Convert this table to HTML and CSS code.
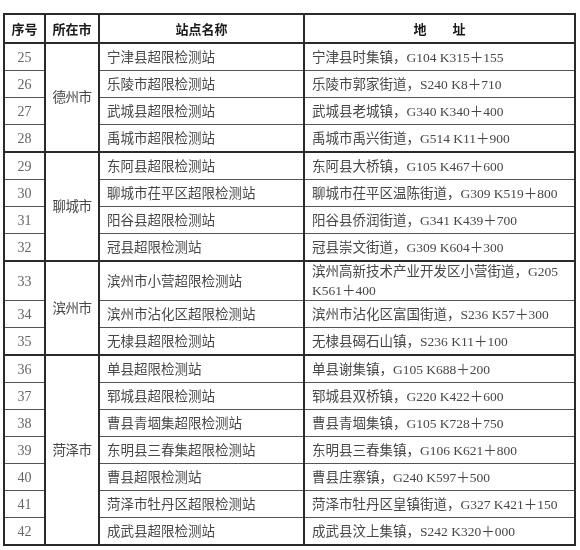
FILE: index.html
```html
<!DOCTYPE html>
<html lang="zh-CN">
<head>
<meta charset="utf-8">
<title>超限检测站</title>
<link rel="stylesheet" href="styles.css">
</head>
<body>
<table class="sites">
  <colgroup><col class="c1"><col class="c2"><col class="c3"><col class="c4"></colgroup>
  <thead>
    <tr><th>序号</th><th>所在市</th><th>站点名称</th><th>地　　址</th></tr>
  </thead>
  <tbody>
    <tr><td class="num">25</td><td class="city" rowspan="4">德州市</td><td>宁津县超限检测站</td><td>宁津县时集镇，G104 K315＋155</td></tr>
    <tr><td class="num">26</td><td>乐陵市超限检测站</td><td>乐陵市郭家街道，S240 K8＋710</td></tr>
    <tr><td class="num">27</td><td>武城县超限检测站</td><td>武城县老城镇，G340 K340＋400</td></tr>
    <tr><td class="num">28</td><td>禹城市超限检测站</td><td>禹城市禹兴街道，G514 K11＋900</td></tr>
  </tbody>
  <tbody>
    <tr><td class="num">29</td><td class="city" rowspan="4">聊城市</td><td>东阿县超限检测站</td><td>东阿县大桥镇，G105 K467＋600</td></tr>
    <tr><td class="num">30</td><td>聊城市茌平区超限检测站</td><td>聊城市茌平区温陈街道，G309 K519＋800</td></tr>
    <tr><td class="num">31</td><td>阳谷县超限检测站</td><td>阳谷县侨润街道，G341 K439＋700</td></tr>
    <tr><td class="num">32</td><td>冠县超限检测站</td><td>冠县崇文街道，G309 K604＋300</td></tr>
  </tbody>
  <tbody>
    <tr><td class="num">33</td><td class="city" rowspan="3">滨州市</td><td>滨州市小营超限检测站</td><td>滨州高新技术产业开发区小营街道，G205 K561＋400</td></tr>
    <tr><td class="num">34</td><td>滨州市沾化区超限检测站</td><td>滨州市沾化区富国街道，S236 K57＋300</td></tr>
    <tr><td class="num">35</td><td>无棣县超限检测站</td><td>无棣县碣石山镇，S236 K11＋100</td></tr>
  </tbody>
  <tbody>
    <tr><td class="num">36</td><td class="city" rowspan="7">菏泽市</td><td>单县超限检测站</td><td>单县谢集镇，G105 K688＋200</td></tr>
    <tr><td class="num">37</td><td>郓城县超限检测站</td><td>郓城县双桥镇，G220 K422＋600</td></tr>
    <tr><td class="num">38</td><td>曹县青堌集超限检测站</td><td>曹县青堌集镇，G105 K728＋750</td></tr>
    <tr><td class="num">39</td><td>东明县三春集超限检测站</td><td>东明县三春集镇，G106 K621＋800</td></tr>
    <tr><td class="num">40</td><td>曹县超限检测站</td><td>曹县庄寨镇，G240 K597＋500</td></tr>
    <tr><td class="num">41</td><td>菏泽市牡丹区超限检测站</td><td>菏泽市牡丹区皇镇街道，G327 K421＋150</td></tr>
    <tr><td class="num">42</td><td>成武县超限检测站</td><td>成武县汶上集镇，S242 K320＋000</td></tr>
  </tbody>
</table>
</body>
</html>
```
FILE: styles.css
```css
html, body {
  margin: 0;
  padding: 0;
  background: #ffffff;
}
body {
  padding: 13px 0 0 3px;
  font-family: "Liberation Serif", "Noto Sans CJK SC", serif;
  color: #474747;
  -webkit-font-smoothing: antialiased;
}
.sites {
  border-collapse: collapse;
  table-layout: fixed;
  width: 571px;
  border: 2px solid #2a2a2a;
  will-change: transform;
}
.c1 { width: 41px; }
.c2 { width: 54px; }
.c3 { width: 205px; }
.c4 { width: 271px; }
.sites th {
  font-family: "Noto Sans CJK SC", sans-serif;
  font-weight: 700;
  font-size: 13px;
  color: #1a1a1a;
  height: 27px;
  padding: 0;
  border: 2px solid #2a2a2a;
  text-align: center;
}
.sites td {
  font-size: 13.5px;
  font-weight: 400;
  line-height: 19px;
  height: 26px;
  padding: 0 6px 0 7px;
  border-top: 1px solid #555555;
  border-bottom: 1px solid #555555;
  border-left: 2px solid #2a2a2a;
  border-right: 2px solid #2a2a2a;
  text-align: left;
  vertical-align: middle;
}
.sites tbody {
  border-top: 2px solid #2a2a2a;
}
.sites td.num {
  text-align: center;
  padding: 0;
  font-size: 14px;
  color: #666666;
}
.sites td.city {
  text-align: center;
  padding: 0;
  letter-spacing: -0.5px;
}
```
